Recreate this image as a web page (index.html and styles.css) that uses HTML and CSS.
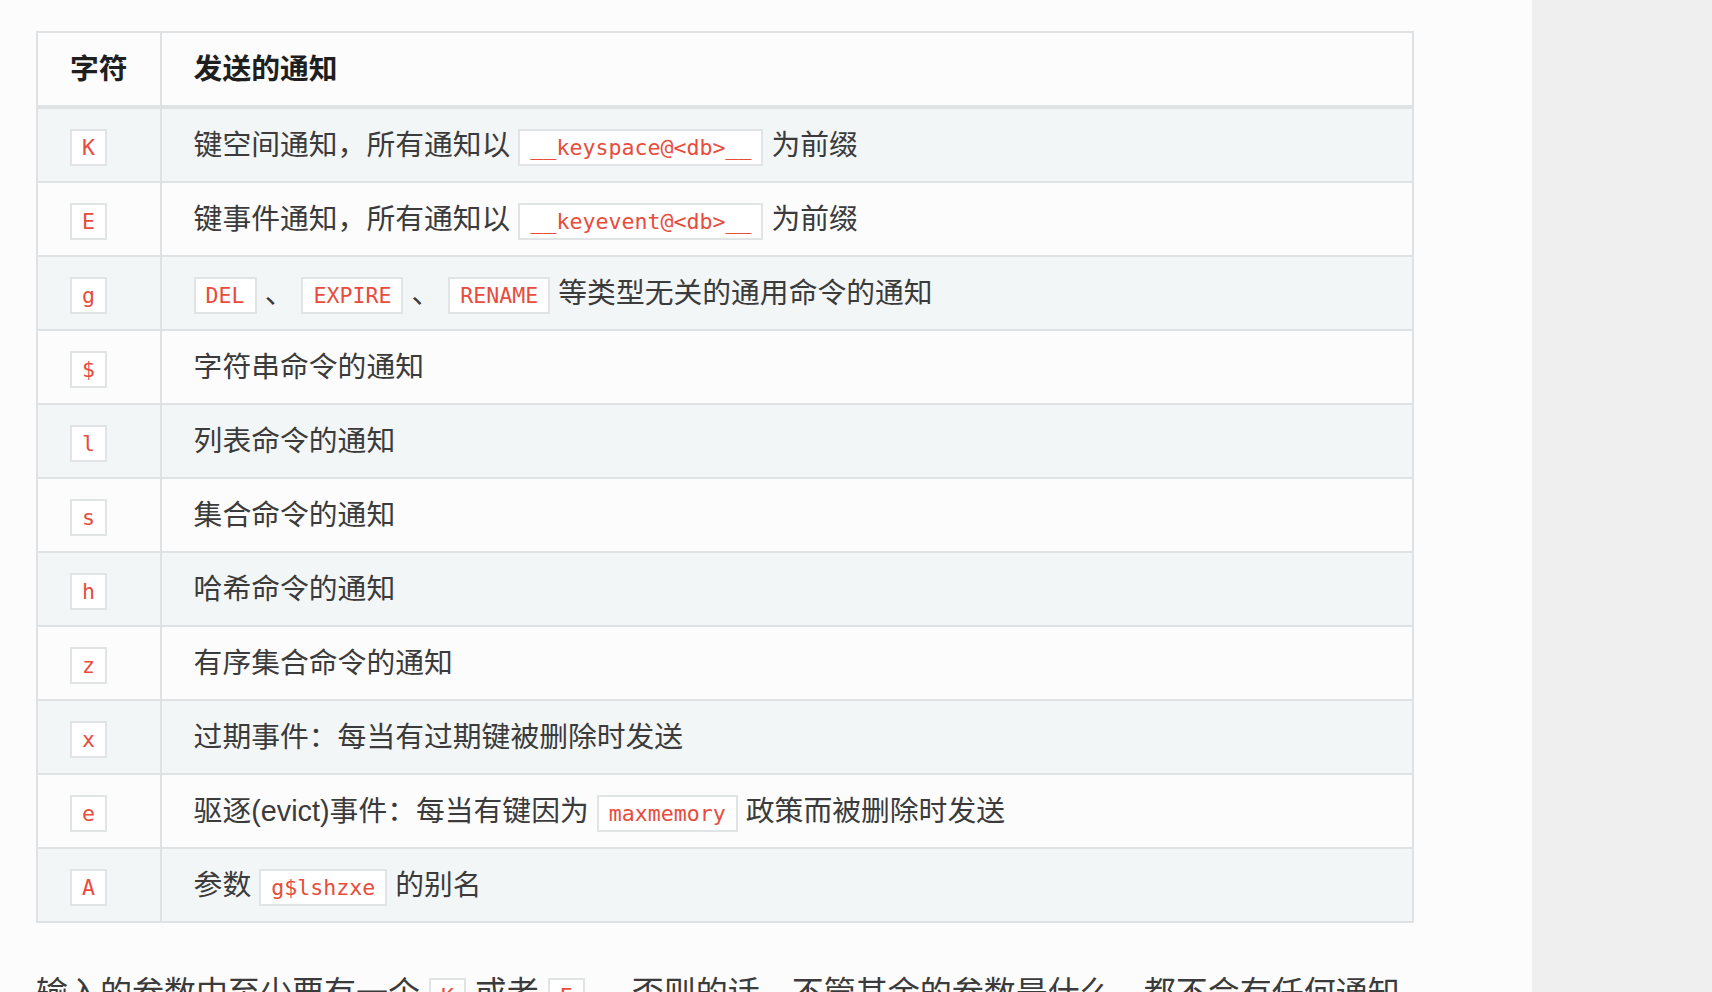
FILE: index.html
```html
<!DOCTYPE html>
<html lang="zh-CN">
<head>
<meta charset="utf-8">
<title>Keyspace notifications</title>
<link rel="stylesheet" href="styles.css">
</head>
<body>
<div class="layout">
  <main class="content">
    <table class="notify">
      <thead>
        <tr><th class="c1">字符</th><th>发送的通知</th></tr>
      </thead>
      <tbody>
        <tr><td class="c1"><code>K</code></td><td>键空间通知，所有通知以 <code>__keyspace@&lt;db&gt;__</code> 为前缀</td></tr>
        <tr><td class="c1"><code>E</code></td><td>键事件通知，所有通知以 <code>__keyevent@&lt;db&gt;__</code> 为前缀</td></tr>
        <tr><td class="c1"><code>g</code></td><td><code>DEL</code> 、 <code>EXPIRE</code> 、 <code>RENAME</code> 等类型无关的通用命令的通知</td></tr>
        <tr><td class="c1"><code>$</code></td><td>字符串命令的通知</td></tr>
        <tr><td class="c1"><code>l</code></td><td>列表命令的通知</td></tr>
        <tr><td class="c1"><code>s</code></td><td>集合命令的通知</td></tr>
        <tr><td class="c1"><code>h</code></td><td>哈希命令的通知</td></tr>
        <tr><td class="c1"><code>z</code></td><td>有序集合命令的通知</td></tr>
        <tr><td class="c1"><code>x</code></td><td>过期事件：每当有过期键被删除时发送</td></tr>
        <tr><td class="c1"><code>e</code></td><td>驱逐(evict)事件：每当有键因为 <code>maxmemory</code> 政策而被删除时发送</td></tr>
        <tr><td class="c1"><code>A</code></td><td>参数 <code>g$lshzxe</code> 的别名</td></tr>
      </tbody>
    </table>
    <p class="para">输入的参数中至少要有一个 <code>K</code> 或者 <code>E</code> <span class="gap">，</span>否则的话，不管其余的参数是什么，都不会有任何通知被分发。</p>
  </main>
  <aside class="side"></aside>
</div>
</body>
</html>
```

FILE: styles.css
```css
html, body {
  margin: 0;
  padding: 0;
  height: 100%;
  overflow: hidden;
}
body {
  background: #fcfcfc;
  font-family: "Liberation Sans", "Noto Sans CJK SC", sans-serif;
  color: #3b3b3b;
  font-size: 32px;
}
.layout {
  display: flex;
  height: 100%;
}
.content {
  flex: 1;
  padding: 31px 118px 0 36px;
  min-width: 0;
}
.side {
  width: 180px;
  flex: none;
  background: #efefef;
}
.notify {
  width: 100%;
  border-collapse: collapse;
  font-size: 28.8px;
}
.notify th,
.notify td {
  border: 2px solid #dfe2e4;
  padding: 13px 32px;
  line-height: 46px;
  text-align: left;
  white-space: nowrap;
}
.notify th {
  font-weight: bold;
  color: #1f1f1f;
  border-bottom-width: 4px;
}
.notify .c1 {
  width: 1px;
}
.notify tbody tr:nth-child(odd) {
  background: #f3f6f7;
}
.notify tbody tr:nth-child(even) {
  background: #fcfcfc;
}
code {
  font-family: "DejaVu Sans Mono", monospace;
  font-size: 21.6px;
  color: #e74c3c;
  background: #ffffff;
  border: 2px solid #e1e4e5;
  padding: 4px 10px;
  margin: 0;
  line-height: 25px;
}
.para {
  margin: 45px 0 0;
  line-height: 51px;
}
.para .gap {
  margin-left: 6px;
}
```
